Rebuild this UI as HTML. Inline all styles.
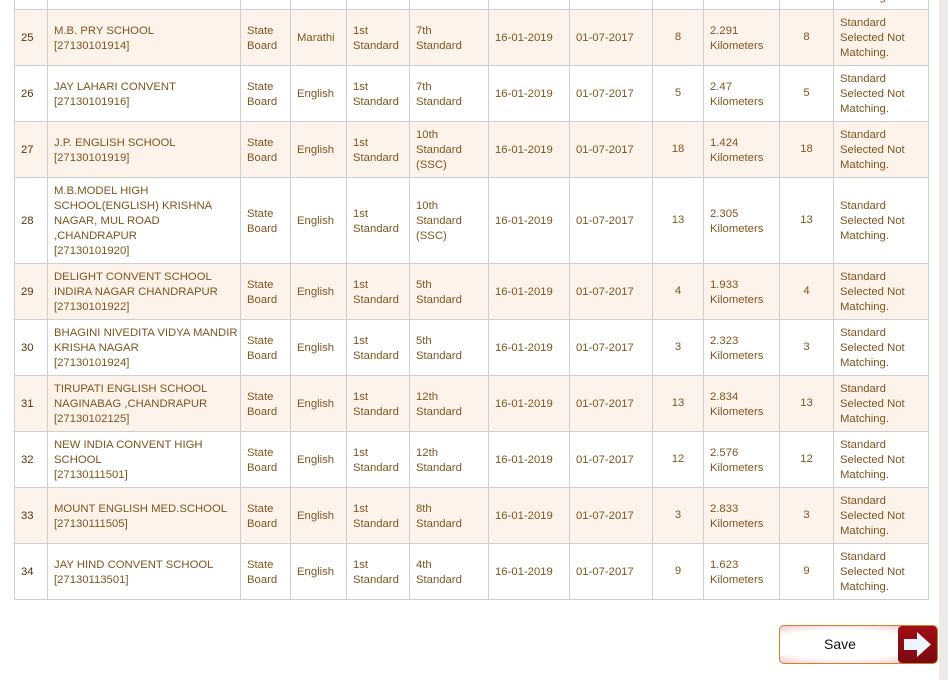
<!DOCTYPE html>
<html><head><meta charset="utf-8"><style>
html,body{margin:0;padding:0;background:#fff;width:948px;height:680px;overflow:hidden;position:relative}
.strip{position:absolute;left:939px;top:0;width:9px;height:680px;background:#eeebe7}
table{position:absolute;left:14px;top:-47px;border-collapse:collapse;table-layout:fixed;font-family:"Liberation Sans",sans-serif;font-size:11.3px;line-height:15px;color:#7d5520}
td{border:1px solid #cfcfcf;padding:2px 0 0 6px;vertical-align:middle;white-space:nowrap;overflow:hidden}
td:first-child{color:#5a3510}
tr.c td{background:#fdf3ea}
tr{height:56px}
.btn{position:absolute;left:779px;top:625px;width:159px;height:39px;border:1px solid #c8862a;border-radius:5px;box-sizing:border-box;overflow:hidden;background:radial-gradient(ellipse at 40% 50%,#fff 55%,#f3d3d8 80%,#d89aa4 100%)}
.btn span{position:absolute;left:0;width:120px;top:10px;text-align:center;font-family:"Liberation Sans",sans-serif;font-size:14px;color:#111}
.btn .ar{position:absolute;right:0;top:0;width:39px;height:37px;background:linear-gradient(#a30d14,#7a0a12);border-radius:4px}
</style></head><body>
<div class="strip"></div>
<table>
<colgroup><col style="width:33px"><col style="width:193px"><col style="width:50px"><col style="width:56px"><col style="width:63px"><col style="width:79px"><col style="width:81px"><col style="width:83px"><col style="width:51px"><col style="width:76px"><col style="width:54px"><col style="width:95px"></colgroup>
<tr><td>24</td><td>SCHOOL<br>[27130101913]</td><td>State<br>Board</td><td>English</td><td>1st<br>Standard</td><td>7th<br>Standard</td><td>16-01-2019</td><td>01-07-2017</td><td style="text-align:center;padding:0">7</td><td>2.1<br>Kilometers</td><td style="text-align:center;padding:0">7</td><td>Standard<br>Selected Not<br>Matching.</td></tr>
<tr class="c"><td>25</td><td>M.B. PRY SCHOOL<br>[27130101914]</td><td>State<br>Board</td><td>Marathi</td><td>1st<br>Standard</td><td>7th<br>Standard</td><td>16-01-2019</td><td>01-07-2017</td><td style="text-align:center;padding:0">8</td><td>2.291<br>Kilometers</td><td style="text-align:center;padding:0">8</td><td>Standard<br>Selected Not<br>Matching.</td></tr>
<tr><td>26</td><td>JAY LAHARI CONVENT<br>[27130101916]</td><td>State<br>Board</td><td>English</td><td>1st<br>Standard</td><td>7th<br>Standard</td><td>16-01-2019</td><td>01-07-2017</td><td style="text-align:center;padding:0">5</td><td>2.47<br>Kilometers</td><td style="text-align:center;padding:0">5</td><td>Standard<br>Selected Not<br>Matching.</td></tr>
<tr class="c"><td>27</td><td>J.P. ENGLISH SCHOOL<br>[27130101919]</td><td>State<br>Board</td><td>English</td><td>1st<br>Standard</td><td>10th<br>Standard<br>(SSC)</td><td>16-01-2019</td><td>01-07-2017</td><td style="text-align:center;padding:0">18</td><td>1.424<br>Kilometers</td><td style="text-align:center;padding:0">18</td><td>Standard<br>Selected Not<br>Matching.</td></tr>
<tr style="height:86px"><td>28</td><td>M.B.MODEL HIGH<br>SCHOOL(ENGLISH) KRISHNA<br>NAGAR, MUL ROAD<br>,CHANDRAPUR<br>[27130101920]</td><td>State<br>Board</td><td>English</td><td>1st<br>Standard</td><td>10th<br>Standard<br>(SSC)</td><td>16-01-2019</td><td>01-07-2017</td><td style="text-align:center;padding:0">13</td><td>2.305<br>Kilometers</td><td style="text-align:center;padding:0">13</td><td>Standard<br>Selected Not<br>Matching.</td></tr>
<tr class="c"><td>29</td><td>DELIGHT CONVENT SCHOOL<br>INDIRA NAGAR CHANDRAPUR<br>[27130101922]</td><td>State<br>Board</td><td>English</td><td>1st<br>Standard</td><td>5th<br>Standard</td><td>16-01-2019</td><td>01-07-2017</td><td style="text-align:center;padding:0">4</td><td>1.933<br>Kilometers</td><td style="text-align:center;padding:0">4</td><td>Standard<br>Selected Not<br>Matching.</td></tr>
<tr><td>30</td><td>BHAGINI NIVEDITA VIDYA MANDIR<br>KRISHA NAGAR<br>[27130101924]</td><td>State<br>Board</td><td>English</td><td>1st<br>Standard</td><td>5th<br>Standard</td><td>16-01-2019</td><td>01-07-2017</td><td style="text-align:center;padding:0">3</td><td>2.323<br>Kilometers</td><td style="text-align:center;padding:0">3</td><td>Standard<br>Selected Not<br>Matching.</td></tr>
<tr class="c"><td>31</td><td>TIRUPATI ENGLISH SCHOOL<br>NAGINABAG ,CHANDRAPUR<br>[27130102125]</td><td>State<br>Board</td><td>English</td><td>1st<br>Standard</td><td>12th<br>Standard</td><td>16-01-2019</td><td>01-07-2017</td><td style="text-align:center;padding:0">13</td><td>2.834<br>Kilometers</td><td style="text-align:center;padding:0">13</td><td>Standard<br>Selected Not<br>Matching.</td></tr>
<tr><td>32</td><td>NEW INDIA CONVENT HIGH<br>SCHOOL<br>[27130111501]</td><td>State<br>Board</td><td>English</td><td>1st<br>Standard</td><td>12th<br>Standard</td><td>16-01-2019</td><td>01-07-2017</td><td style="text-align:center;padding:0">12</td><td>2.576<br>Kilometers</td><td style="text-align:center;padding:0">12</td><td>Standard<br>Selected Not<br>Matching.</td></tr>
<tr class="c"><td>33</td><td>MOUNT ENGLISH MED.SCHOOL<br>[27130111505]</td><td>State<br>Board</td><td>English</td><td>1st<br>Standard</td><td>8th<br>Standard</td><td>16-01-2019</td><td>01-07-2017</td><td style="text-align:center;padding:0">3</td><td>2.833<br>Kilometers</td><td style="text-align:center;padding:0">3</td><td>Standard<br>Selected Not<br>Matching.</td></tr>
<tr><td>34</td><td>JAY HIND CONVENT SCHOOL<br>[27130113501]</td><td>State<br>Board</td><td>English</td><td>1st<br>Standard</td><td>4th<br>Standard</td><td>16-01-2019</td><td>01-07-2017</td><td style="text-align:center;padding:0">9</td><td>1.623<br>Kilometers</td><td style="text-align:center;padding:0">9</td><td>Standard<br>Selected Not<br>Matching.</td></tr>
</table>
<div class="btn"><span>Save</span><div class="ar"><svg width="39" height="37" viewBox="0 0 39 37"><path d="M6 13h13v-7l14 12.5-14 12.5v-7H6z" fill="#eef4fb"/></svg></div></div>
</body></html>
